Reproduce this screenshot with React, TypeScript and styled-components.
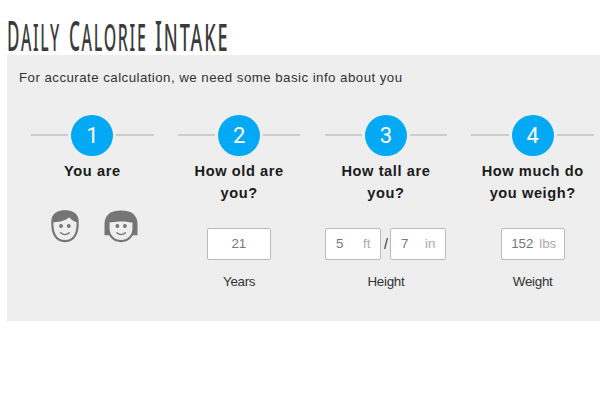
import React from "react";
import styled, { createGlobalStyle } from "styled-components";

const GlobalStyle = createGlobalStyle`
  *, *::before, *::after { box-sizing: border-box; }
  html, body { margin: 0; background: #fff; overflow: hidden; }
  body { font-family: "Liberation Sans", Arial, sans-serif; color: #333; }
`;

const Page = styled.main`
  width: 600px;
  height: 400px;
  padding-left: 7px;
  overflow: hidden;
`;

const Title = styled.h1`
  margin: 0;
  height: 55px;
  padding: 14px 0 0 0;
  display: flex;
  font: 500 38px/42px "Noto Sans", sans-serif;
  color: #3b3b3b;
  white-space: nowrap;
`;

const Word = styled.span<{ $width: number; $squeeze: number }>`
  width: ${(p) => p.$width}px;
  flex: none;
  letter-spacing: 4px;
  transform: scaleX(${(p) => p.$squeeze});
  transform-origin: 0 0;
`;

const Initial = styled.span`
  font-size: 41px;
`;

const Panel = styled.section`
  height: 266px;
  padding: 13.5px 0 0 12px;
  background: #eee;
`;

const Intro = styled.p`
  margin: 0;
  font-size: 13.3px;
  line-height: 18px;
  letter-spacing: 0.45px;
`;

const Steps = styled.div`
  display: grid;
  grid-template-columns: repeat(4, 122.7px);
  column-gap: 24.1px;
  padding: 28.1px 0 0 12px;
`;

const Step = styled.section`
  display: flex;
  flex-direction: column;
  align-items: center;
`;

const Marker = styled.div`
  width: 100%;
  display: flex;
  align-items: center;
  gap: 3px;
  &::before, &::after {
    content: "";
    flex: 1;
    height: 2px;
    background: #ccc;
  }
`;

const Circle = styled.span`
  width: 42px;
  height: 41.6px;
  border-radius: 50%;
  background: #03a9f4;
  color: #fff;
  font: 22px/41px Roboto, sans-serif;
  text-align: center;
`;

const Question = styled.h2`
  margin: 3.8px -10px 0;
  height: 68px;
  font-size: 14.6px;
  line-height: 22px;
  letter-spacing: 0.58px;
  color: #1a1a1a;
  text-align: center;
  white-space: pre-line;
`;

const Fields = styled.div`
  height: 32px;
  display: flex;
  align-items: center;
  justify-content: center;
`;

const Field = styled.div<{ $width: number }>`
  width: ${(p) => p.$width}px;
  height: 32px;
  padding: 0 10px 0 9.5px;
  display: flex;
  align-items: center;
  justify-content: space-between;
  border: 1px solid #bbb;
  border-radius: 2px;
  background: #fff;
  color: #777;
  font-size: 13.3px;
`;

const WeightField = styled(Field)`
  padding-right: 7.5px;
`;

const Value = styled.span<{ $centered?: boolean }>`
  flex: ${(p) => (p.$centered ? 1 : "none")};
  text-align: center;
`;

const Unit = styled.span`
  color: #aaa;
`;

const Slash = styled.span`
  width: 9px;
  text-align: center;
  font-size: 14px;
`;

const Caption = styled.div`
  margin-top: 13px;
  font-size: 13.4px;
  line-height: 18px;
  letter-spacing: -0.3px;
`;

const Faces = styled.div`
  display: flex;
  gap: 25px;
  margin: -18px 0 0 4px;
  svg { display: block; }
`;

const Man = () => (
  <svg width="28" height="33" viewBox="0 0 28 33">
    <path d="M1.4 12C1 5 6 1.4 14 1.4S27 5 26.6 12C27 22 24 31.1 14 31.1S1 22 1.4 12Z" fill="#eee" stroke="#757575" strokeWidth="2.1" />
    <path d="M.8 12.5C.6 4.5 6 .6 14 .6s13.4 3.9 13.2 11.9C23 11.5 20 10 18.4 7.2 14 11.2 7 12 .8 12.5Z" fill="#757575" />
    <circle cx="10" cy="16" r="1.9" fill="#757575" />
    <circle cx="17.8" cy="16" r="1.9" fill="#757575" />
    <path d="M9.6 22.8c2.6 2.2 6 2.2 8.6 0" fill="none" stroke="#757575" strokeWidth="1.4" strokeLinecap="round" />
  </svg>
);

const Woman = () => (
  <svg width="34" height="33" viewBox="0 0 34 33">
    <path d="M.5 25.3V14C.5 5 7 .6 17 .6S33.5 5 33.5 14v11.3Z" fill="#757575" />
    <path d="M4.5 10.5V18C4.5 26 10 31.1 17 31.1S29.5 26 29.5 18v-7.5Z" fill="#eee" stroke="#757575" strokeWidth="2.1" />
    <path d="M4 12.5V7h26v5.5c-5 0-9-.8-11.5-3.3C15 11.5 9 12.5 4 12.5Z" fill="#757575" />
    <circle cx="13.4" cy="16" r="1.9" fill="#757575" />
    <circle cx="20.9" cy="16" r="1.9" fill="#757575" />
    <path d="M12.8 22.8c2.6 2.2 6 2.2 8.6 0" fill="none" stroke="#757575" strokeWidth="1.4" strokeLinecap="round" />
  </svg>
);

type StepProps = { number: number; question: string; children: React.ReactNode };

const StepColumn = ({ number, question, children }: StepProps) => (
  <Step>
    <Marker>
      <Circle>{number}</Circle>
    </Marker>
    <Question>{question}</Question>
    {children}
  </Step>
);

export default function App() {
  return (
    <Page>
      <GlobalStyle />
      <Title>
        <Word $width={62} $squeeze={0.415}><Initial>D</Initial>AILY</Word>
        <Word $width={86} $squeeze={0.42}><Initial>C</Initial>ALORIE</Word>
        <Word $width={74} $squeeze={0.475}><Initial>I</Initial>NTAKE</Word>
      </Title>
      <Panel>
        <Intro>For accurate calculation, we need some basic info about you</Intro>
        <Steps>
          <StepColumn number={1} question="You are">
            <Faces>
              <Man />
              <Woman />
            </Faces>
          </StepColumn>
          <StepColumn number={2} question={"How old are\nyou?"}>
            <Fields>
              <Field $width={64}><Value $centered>21</Value></Field>
            </Fields>
            <Caption>Years</Caption>
          </StepColumn>
          <StepColumn number={3} question={"How tall are\nyou?"}>
            <Fields>
              <Field $width={56}><Value>5</Value><Unit>ft</Unit></Field>
              <Slash>/</Slash>
              <Field $width={56}><Value>7</Value><Unit>in</Unit></Field>
            </Fields>
            <Caption>Height</Caption>
          </StepColumn>
          <StepColumn number={4} question={"How much do\nyou weigh?"}>
            <Fields>
              <WeightField $width={64}><Value>152</Value><Unit>lbs</Unit></WeightField>
            </Fields>
            <Caption>Weight</Caption>
          </StepColumn>
        </Steps>
      </Panel>
    </Page>
  );
}
